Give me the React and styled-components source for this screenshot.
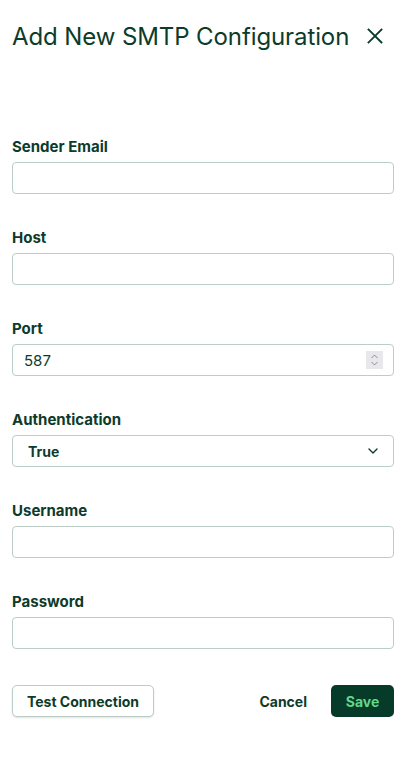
import React from "react";
import styled, { createGlobalStyle } from "styled-components";

const GlobalStyle = createGlobalStyle`
  html, body {
    margin: 0;
    padding: 0;
    background: #ffffff;
  }
  body {
    font-family: Inter, "Noto Sans", "Liberation Sans", sans-serif;
    color: #0c3b2b;
  }
  * {
    box-sizing: border-box;
  }
`;

const Panel = styled.div`
  width: 406px;
  padding: 20px 12px 24px 12px;
  display: flex;
  flex-direction: column;
`;

const Header = styled.div`
  display: flex;
  align-items: center;
  justify-content: space-between;
  height: 32px;
  padding-right: 10px;
`;

const Title = styled.h1`
  margin: 0;
  font-size: 24px;
  font-weight: 400;
  letter-spacing: -0.1px;
  color: #0c3b2b;
`;

const CloseButton = styled.button`
  border: none;
  background: none;
  padding: 0;
  width: 18px;
  height: 18px;
  display: flex;
  align-items: center;
  justify-content: center;
  cursor: pointer;
  color: #0c3b2b;
`;

const Form = styled.form`
  display: flex;
  flex-direction: column;
  gap: 34px;
  margin-top: 85px;
`;

const Field = styled.div`
  display: flex;
  flex-direction: column;
  gap: 5px;
`;

const Label = styled.label`
  font-size: 15px;
  line-height: 20px;
  font-weight: 700;
  color: #0c3b2b;
`;

const Input = styled.input`
  height: 32px;
  width: 100%;
  border: 1px solid #bccdc6;
  border-radius: 4px;
  padding: 0 11px;
  font-family: inherit;
  font-size: 15px;
  color: #0c3b2b;
  outline: none;
  background: #fff;
`;

const Box = styled.div`
  height: 32px;
  border: 1px solid #bccdc6;
  border-radius: 4px;
  display: flex;
  align-items: center;
  padding: 0 ${(p) => p.$right}px 0 11px;
  background: #fff;
`;

const BareInput = styled.input`
  flex: 1;
  border: none;
  outline: none;
  padding: 0;
  font-family: inherit;
  font-size: 15px;
  color: #0c3b2b;
  background: transparent;
`;

const Stepper = styled.span`
  width: 17px;
  height: 18px;
  background: #e8e8ec;
  display: flex;
  align-items: center;
  justify-content: center;
`;

const Select = styled.select`
  flex: 1;
  appearance: none;
  border: none;
  outline: none;
  padding: 0 0 0 4px;
  font-family: inherit;
  font-size: 14px;
  font-weight: 700;
  color: #0c3b2b;
  background: transparent;
`;

const Actions = styled.div`
  display: flex;
  align-items: center;
  margin-top: 36px;
`;

const OutlineButton = styled.button`
  height: 32px;
  padding: 0 14px;
  border: 1px solid #bccdc6;
  border-radius: 5px;
  background: #fff;
  box-shadow: 0 1px 2px rgba(0, 0, 0, 0.12);
  font-family: inherit;
  font-size: 14px;
  font-weight: 700;
  color: #0c3b2b;
`;

const TextButton = styled.button`
  margin-left: auto;
  height: 32px;
  padding: 0 24px;
  border: none;
  background: none;
  font-family: inherit;
  font-size: 14px;
  font-weight: 700;
  color: #0c3b2b;
`;

const PrimaryButton = styled.button`
  height: 32px;
  width: 63px;
  border: none;
  border-radius: 5px;
  background: #053b28;
  font-family: inherit;
  font-size: 14px;
  font-weight: 700;
  color: #62d68c;
`;

export default function App() {
  return (
    <>
      <GlobalStyle />
      <Panel>
        <Header>
          <Title>Add New SMTP Configuration</Title>
          <CloseButton aria-label="Close">
            <svg width="16" height="16" viewBox="0 0 16 16" fill="none" stroke="currentColor" strokeWidth="1.8" strokeLinecap="square">
              <path d="M1.5 1.5 L14.5 14.5 M14.5 1.5 L1.5 14.5" />
            </svg>
          </CloseButton>
        </Header>
        <Form onSubmit={(e) => e.preventDefault()}>
          <Field>
            <Label>Sender Email</Label>
            <Input type="email" />
          </Field>
          <Field>
            <Label>Host</Label>
            <Input type="text" />
          </Field>
          <Field>
            <Label>Port</Label>
            <Box $right={10}>
              <BareInput type="text" defaultValue="587" />
              <Stepper>
                <svg width="9" height="14" viewBox="0 0 9 14" fill="none" stroke="#8e8e96" strokeWidth="1">
                  <path d="M1.5 5 L4.5 2 L7.5 5" />
                  <path d="M1.5 9 L4.5 12 L7.5 9" />
                </svg>
              </Stepper>
            </Box>
          </Field>
          <Field>
            <Label>Authentication</Label>
            <Box $right={15}>
              <Select defaultValue="true">
                <option value="true">True</option>
                <option value="false">False</option>
              </Select>
              <svg width="10" height="6" viewBox="0 0 10 6" fill="none" stroke="#0c3b2b" strokeWidth="1.4" strokeLinecap="round" strokeLinejoin="round">
                <path d="M1 1 L5 5 L9 1" />
              </svg>
            </Box>
          </Field>
          <Field>
            <Label>Username</Label>
            <Input type="text" />
          </Field>
          <Field>
            <Label>Password</Label>
            <Input type="password" />
          </Field>
        </Form>
        <Actions>
          <OutlineButton type="button">Test Connection</OutlineButton>
          <TextButton type="button">Cancel</TextButton>
          <PrimaryButton type="button">Save</PrimaryButton>
        </Actions>
      </Panel>
    </>
  );
}
